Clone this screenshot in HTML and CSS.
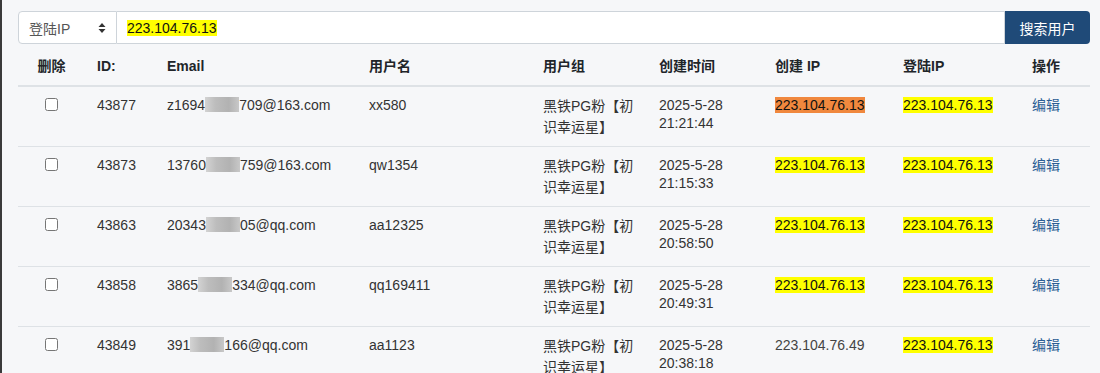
FILE: index.html
```html
<!DOCTYPE html>
<html lang="zh-CN">
<head>
    <meta charset="UTF-8">
    <title>用户管理</title>
    <link rel="stylesheet" href="styles.css">
</head>
<body>
    <div id="wrap">
        <form class="search">
            <div class="search-type">
                <span>登陆IP</span>
                <svg class="arrows" width="8" height="12" viewBox="0 0 8 12">
                    <path d="M4 1 L7.5 5 L0.5 5 Z" fill="#333"/>
                    <path d="M4 11 L7.5 7 L0.5 7 Z" fill="#333"/>
                </svg>
            </div>
            <div class="search-input"><mark>223.104.76.13</mark></div>
            <button type="button">搜索用户</button>
        </form>

        <table class="users">
            <thead>
                <tr>
                    <th class="c-del">删除</th>
                    <th class="c-id">ID:</th>
                    <th class="c-mail">Email</th>
                    <th class="c-name">用户名</th>
                    <th class="c-group">用户组</th>
                    <th class="c-time">创建时间</th>
                    <th class="c-cip">创建 IP</th>
                    <th class="c-lip">登陆IP</th>
                    <th class="c-op">操作</th>
                </tr>
            </thead>
            <tbody>
                <tr>
                    <td class="c-del"><input type="checkbox"></td>
                    <td>43877</td>
                    <td>z1694<span class="blur"></span>709@163.com</td>
                    <td>xx580</td>
                    <td class="group">黑铁PG粉【初识幸运星】</td>
                    <td class="time">2025-5-28 21:21:44</td>
                    <td><mark class="hot">223.104.76.13</mark></td>
                    <td><mark>223.104.76.13</mark></td>
                    <td><a href="#">编辑</a></td>
                </tr>
                <tr>
                    <td class="c-del"><input type="checkbox"></td>
                    <td>43873</td>
                    <td>13760<span class="blur"></span>759@163.com</td>
                    <td>qw1354</td>
                    <td class="group">黑铁PG粉【初识幸运星】</td>
                    <td class="time">2025-5-28 21:15:33</td>
                    <td><mark>223.104.76.13</mark></td>
                    <td><mark>223.104.76.13</mark></td>
                    <td><a href="#">编辑</a></td>
                </tr>
                <tr>
                    <td class="c-del"><input type="checkbox"></td>
                    <td>43863</td>
                    <td>20343<span class="blur"></span>05@qq.com</td>
                    <td>aa12325</td>
                    <td class="group">黑铁PG粉【初识幸运星】</td>
                    <td class="time">2025-5-28 20:58:50</td>
                    <td><mark>223.104.76.13</mark></td>
                    <td><mark>223.104.76.13</mark></td>
                    <td><a href="#">编辑</a></td>
                </tr>
                <tr>
                    <td class="c-del"><input type="checkbox"></td>
                    <td>43858</td>
                    <td>3865<span class="blur"></span>334@qq.com</td>
                    <td>qq169411</td>
                    <td class="group">黑铁PG粉【初识幸运星】</td>
                    <td class="time">2025-5-28 20:49:31</td>
                    <td><mark>223.104.76.13</mark></td>
                    <td><mark>223.104.76.13</mark></td>
                    <td><a href="#">编辑</a></td>
                </tr>
                <tr>
                    <td class="c-del"><input type="checkbox"></td>
                    <td>43849</td>
                    <td>391<span class="blur"></span>166@qq.com</td>
                    <td>aa1123</td>
                    <td class="group">黑铁PG粉【初识幸运星】</td>
                    <td class="time">2025-5-28 20:38:18</td>
                    <td class="plain">223.104.76.49</td>
                    <td><mark>223.104.76.13</mark></td>
                    <td><a href="#">编辑</a></td>
                </tr>
            </tbody>
        </table>
    </div>
</body>
</html>
```

FILE: styles.css
```css
*{box-sizing: border-box;}

html, body{
    margin: 0;
    padding: 0;
}

body{
    background: #f6f7f9;
    border-left: 2px solid #3a3a3a;
    min-height: 373px;
    font-family: "Liberation Sans", Arial, "Noto Sans CJK SC", sans-serif;
    font-size: 14px;
    color: #333;
    overflow: hidden;
}

#wrap{
    padding: 11px 10px 0 16px;
}

/* 검색 폼 */
.search{
    display: flex;
    width: 1072px;
    height: 33px;
}

.search-type{
    display: flex;
    align-items: center;
    justify-content: space-between;
    width: 99px;
    padding: 0 10px 0 10px;
    background: #fff;
    border: 1px solid #ced4da;
    border-radius: 4px 0 0 4px;
    color: #555;
}

.search-input{
    display: flex;
    align-items: center;
    flex: 1;
    padding: 0 10px;
    background: #fff;
    border: 1px solid #ced4da;
    border-left: none;
    font-size: 14px;
    color: #222;
}

mark{
    background: #ffff00;
    color: #111;
}

mark.hot{background: #f0883e;}

.search button{
    width: 85px;
    border: none;
    border-radius: 0 4px 4px 0;
    background: #1f4a78;
    color: #fff;
    font-family: inherit;
    font-size: 14px;
}

/* 목록 */
.users{
    width: 1072px;
    border-collapse: collapse;
    table-layout: fixed;
}

.users th{
    padding: 12px 12px 9px;
    line-height: 20px;
    text-align: left;
    font-weight: bold;
    color: #212529;
    border-bottom: 2px solid #dee2e6;
}

.users td{
    padding: 9px 12px 8px;
    line-height: 19px;
    vertical-align: top;
    border-bottom: 1px solid #dee2e6;
}

.users .c-del{width: 67px; text-align: center;}
.users .c-id{width: 70px;}
.users .c-mail{width: 202px;}
.users .c-name{width: 174px;}
.users .c-group{width: 116px;}
.users .c-time{width: 116px;}
.users .c-cip{width: 128px;}
.users .c-lip{width: 129px;}
.users .c-op{width: 70px;}

.users td.group{line-height: 21px;}
.users td.time{line-height: 18px; color: #333;}
.users td.plain{color: #444;}

.users input[type=checkbox]{
    width: 13px;
    height: 13px;
    margin: 2px 0 0;
}

.users a{
    color: #2a5d94;
    text-decoration: none;
}

.blur{
    display: inline-block;
    width: 34px;
    height: 15px;
    vertical-align: -2px;
    background: linear-gradient(90deg, #d3d3d3, #bdbdbd 30%, #b2b2b2 70%, #c8c8c8);
}
```
